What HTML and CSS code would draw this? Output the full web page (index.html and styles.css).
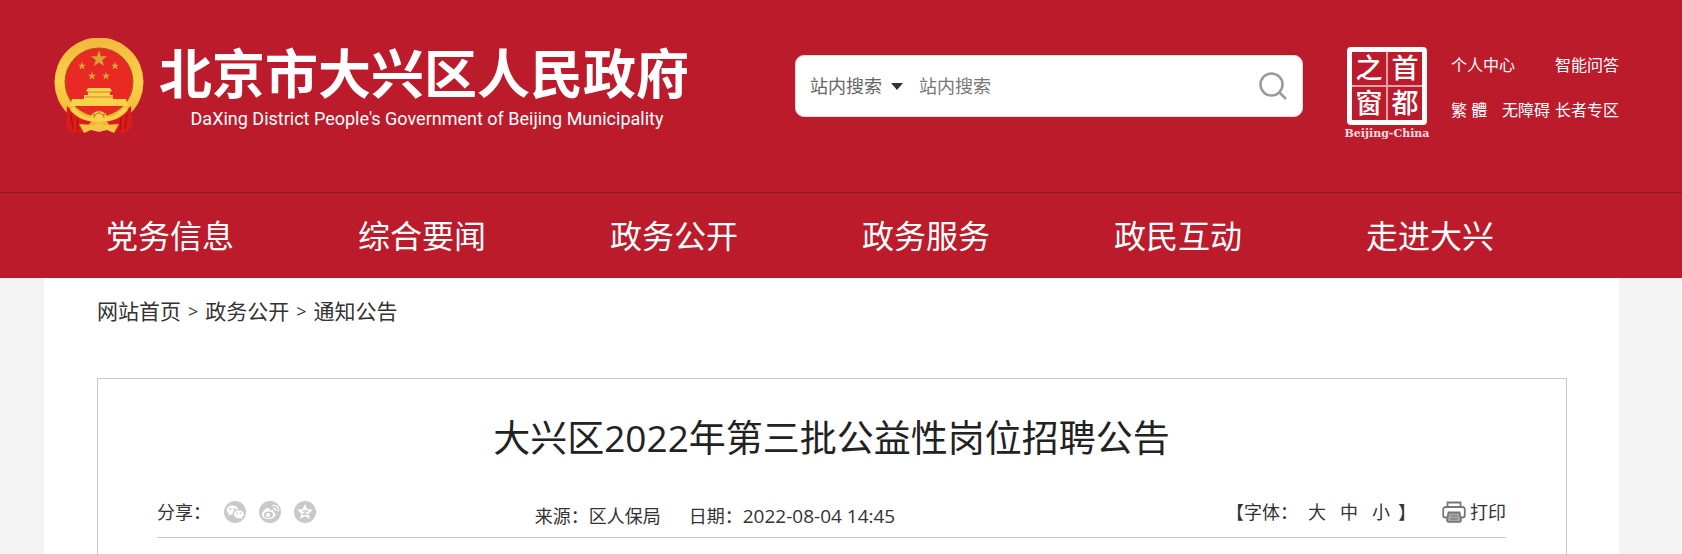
FILE: index.html
```html
<!DOCTYPE html>
<html lang="zh-CN">
<head>
    <meta charset="UTF-8">
    <meta name="viewport" content="width=device-width, initial-scale=1.0">
    <title>大兴区2022年第三批公益性岗位招聘公告</title>
    <link rel="stylesheet" href="styles.css">
</head>
<body>
    <header class="header">
        <div class="top wrap">
            <a class="logo" href="#">
                <svg class="emblem" viewBox="0 0 90 97" aria-hidden="true">
                    <defs>
                        <linearGradient id="gold" x1="0" y1="0" x2="0" y2="1">
                            <stop offset="0" stop-color="#f3b83c"/>
                            <stop offset=".5" stop-color="#fbd04a"/>
                            <stop offset="1" stop-color="#eeb02f"/>
                        </linearGradient>
                        <path id="star" d="M0-10 2.4-3.2 9.5-3.1 3.8 1.2 5.9 8.1 0 4-5.9 8.1-3.8 1.2-9.5-3.1-2.4-3.2z"/>
                    </defs>
                    <circle cx="45" cy="44" r="44.500" fill="url(#gold)"/>
                    <circle cx="45" cy="44" r="34" fill="#e92a24" stroke="#a9581d"/>
                    <g fill="#d9a436">
                        <use href="#star" transform="translate(45 21) scale(.85)"/>
                        <use href="#star" transform="translate(28 28) scale(.42)"/>
                        <use href="#star" transform="translate(61 28) scale(.42)"/>
                        <use href="#star" transform="translate(38 38) scale(.42)"/>
                        <use href="#star" transform="translate(52 38) scale(.42)"/>
                    </g>
                    <path d="M34 50h22l2 3-2 1v3h3v4h13l2 7H16l2-7h12v-4h4v-3l-2-1z" fill="#fbd24c"/>
                    <path d="M33 54h24M31 59h28" stroke="#c7702a" stroke-width=".8"/>
                    <path d="M13 68c8 8 16 12 25 14l-8 12-10 1-8-5zM77 68c-8 8-16 12-25 14l8 12 10 1 8-5z" fill="#dc1b1b"/>
                    <path d="M17 76l2 15M23 80l1 13M73 76l-2 15M67 80l-1 13" stroke="#a80e16" stroke-width="1.200"/>
                    <path d="M19 69c7 8 14 11 26 12 12-1 19-4 26-12l3 3c-7 8-15 12-29 12s-22-4-29-12z" fill="#fbd04a"/>
                    <path d="M36 82a9 9 0 0 1 18 0z" fill="#fbd04a"/>
                    <path d="M40 80a5 5 0 0 1 10 0M45 72v4M38 75l3 3M52 75l-3 3" fill="none" stroke="#cf7d22" stroke-width="1.200"/>
                    <path d="M25 86l14 1 6-3 6 3 14-1-5 9-7-3-8 2-8-2-7 3z" fill="#f4c545"/>
                </svg>
                <span class="logo-text">
                    <strong class="logo-cn">北京市大兴区人民政府</strong>
                    <span class="logo-en">DaXing District People's Government of Beijing Municipality</span>
                </span>
            </a>

            <form class="search">
                <button class="search-type" type="button">站内搜索<span class="arrow"></span></button>
                <input class="search-input" type="text" placeholder="站内搜索" aria-label="站内搜索">
                <button class="search-btn" type="submit" aria-label="搜索">
                    <svg width="28" height="28" viewBox="0 0 28 28" fill="none" stroke="#999" stroke-width="2.500">
                        <circle cx="12.500" cy="12.500" r="11"/>
                        <path d="M20 20l7 7"/>
                    </svg>
                </button>
            </form>

            <a class="capital" href="#">
                <span class="stamp">
                    <span>之</span><span>首</span>
                    <span>窗</span><span>都</span>
                </span>
                <span class="capital-en">Beijing-China</span>
            </a>

            <div class="links">
                <div class="links-row"><a href="#">个人中心</a><a href="#">智能问答</a></div>
                <div class="links-row"><a href="#">繁 體</a><a class="barrier" href="#">无障碍</a><a href="#">长者专区</a></div>
            </div>
        </div>
        <nav class="nav">
            <ul class="nav-list wrap">
                <li><a href="#">党务信息</a></li>
                <li><a href="#">综合要闻</a></li>
                <li><a href="#">政务公开</a></li>
                <li><a href="#">政务服务</a></li>
                <li><a href="#">政民互动</a></li>
                <li><a href="#">走进大兴</a></li>
            </ul>
        </nav>
    </header>

    <main class="main wrap">
        <div class="crumbs">
            <a href="#">网站首页</a><span>&gt;</span><a href="#">政务公开</a><span>&gt;</span><a href="#">通知公告</a>
        </div>

        <article class="article">
            <h1>大兴区2022年第三批公益性岗位招聘公告</h1>
            <div class="info">
                <div class="share">
                    <span>分享：</span>
                    <a href="#" aria-label="微信">
                        <svg width="22" height="22" viewBox="0 0 22 22">
                            <circle cx="11" cy="11" r="11" fill="#c9c9c9"/>
                            <path d="M8.500 4.500c-3.300 0-5.700 2-5.700 4.700 0 1.500.8 2.700 2 3.600l-.5 2 2.200-1.200 2 .3c-.3-3.500 2.500-5.700 5.700-5.700-.6-2.200-2.900-3.700-5.700-3.700z" fill="#fff"/>
                            <path d="M15 9.200c-2.900 0-5 1.800-5 4s2.100 4 5 4l1.600-.3 1.800 1-.5-1.700c1.200-.8 2-1.800 2-3 0-2.200-2.100-4-4.900-4z" fill="#fff"/>
                            <g fill="#bbb"><circle cx="6.500" cy="8" r=".9"/><circle cx="10.500" cy="8" r=".9"/><circle cx="13.300" cy="12.300" r=".8"/><circle cx="16.700" cy="12.300" r=".8"/></g>
                        </svg>
                    </a>
                    <a href="#" aria-label="微博">
                        <svg width="22" height="22" viewBox="0 0 22 22" fill="none">
                            <circle cx="11" cy="11" r="11" fill="#c9c9c9"/>
                            <path d="M9 7c-2 0-6 3.500-6 6.500S6 18 9.500 18s7-2 7-4.500c0-1.500-1-2-2.200-2.300.7-2-.7-2.700-3.600-1.600C11 8 10.500 7 9 7z" fill="#fff"/>
                            <ellipse cx="9.500" cy="13.700" rx="4.500" ry="3.200" fill="#c9c9c9"/>
                            <circle cx="9" cy="14" r="2" fill="#fff"/>
                            <path d="M14 7.500c2-.3 3 .8 2.700 2.500M13.500 4.500c4-.6 6.500 2 5.800 6" stroke="#fff" stroke-width="1.300"/>
                        </svg>
                    </a>
                    <a href="#" aria-label="QQ空间">
                        <svg width="22" height="22" viewBox="0 0 22 22">
                            <circle cx="11" cy="11" r="11" fill="#c9c9c9"/>
                            <path d="M11 3l2.300 5 5.500.7-4 3.800 1 5.500-4.800-2.700L6.200 18l1-5.500-4-3.800 5.500-.7z" fill="#fff"/>
                            <path d="M8 9.800h5.500l-4.500 3.500h5.500" fill="none" stroke="#c9c9c9" stroke-width="1.200"/>
                        </svg>
                    </a>
                </div>
                <div class="source">
                    <span>来源：区人保局</span>
                    <span>日期：<time class="date">2022-08-04 14:45</time></span>
                </div>
                <div class="tools">
                    <span>【字体：</span>
                    <div class="sizes">
                        <a href="#">大</a>
                        <a href="#">中</a>
                        <a href="#">小</a>
                    </div>
                    <span>】</span>
                    <a class="print" href="#">
                        <svg width="24" height="22" viewBox="0 0 24 22" fill="none" stroke="#777" stroke-width="1.800">
                            <path d="M5.500 6V1.500h13V6"/>
                            <path d="M5 16.500H3.500a2.300 2.300 0 0 1-2.300-2.300V8.500A2.500 2.500 0 0 1 3.700 6h16.600a2.500 2.500 0 0 1 2.500 2.500v5.700a2.300 2.300 0 0 1-2.300 2.300H19"/>
                            <path d="M6.500 11.500h11L19 19a1.800 1.800 0 0 1-1.800 1.800H6.800A1.800 1.800 0 0 1 5 19z" fill="#aaa"/>
                            <path d="M8.500 15h7M8.500 17.800h7" stroke-width="1.200"/>
                        </svg>
                        打印
                    </a>
                </div>
            </div>
        </article>
    </main>
</body>
</html>
```

FILE: styles.css
```css
* {
    margin: 0;
    padding: 0;
    box-sizing: border-box;
}

body {
    display: flex;
    flex-direction: column;
    min-height: 100vh;
    background: #f4f4f4;
    color: #333;
    font-family: "Open Sans", "Noto Sans CJK SC", sans-serif;
    font-size: 18px;
    line-height: 24px;
}

a {
    color: inherit;
    text-decoration: none;
}

button,
input {
    border: none;
    background: none;
    font: inherit;
    color: inherit;
}

svg {
    display: block;
}

.wrap {
    margin: 0 63px 0 44px;
}

/* header */
.header {
    background: #bc1b2c;
    color: #fff;
}

.top {
    display: flex;
    align-items: flex-start;
    height: 192px;
    padding-top: 38px;
}

.logo {
    display: flex;
    gap: 15px;
    padding-left: 10px;
}

.emblem {
    width: 90px;
    height: 97px;
}

.logo-text {
    display: flex;
    flex-direction: column;
    align-items: center;
    padding-top: 5px;
}

.logo-cn {
    font-family: "Noto Sans CJK SC", sans-serif;
    font-size: 53px;
    font-weight: 700;
    line-height: 56px;
}

.logo-en {
    padding-left: 6px;
    font-family: Roboto, sans-serif;
    font-size: 18px;
    line-height: 40px;
}

.search {
    display: flex;
    align-items: center;
    flex: 1;
    height: 62px;
    margin: 17px 40px 0 106px;
    padding: 0 15px 0 14px;
    border: 1px solid #ddd;
    border-radius: 9px;
    background: #fff;
    color: #666;
}

.search-type {
    display: flex;
    align-items: center;
    gap: 9px;
    cursor: pointer;
}

.arrow {
    border: 6px solid transparent;
    border-top: 7px solid #333;
    border-bottom: 0;
}

.search-input {
    flex: 1;
    min-width: 0;
    margin-left: 16px;
    outline: none;
}

.search-input::placeholder {
    color: #777;
    opacity: 1;
}

.search-btn {
    cursor: pointer;
}

.capital {
    display: flex;
    flex-direction: column;
    align-items: center;
    width: 88px;
    padding-top: 9px;
}

.stamp {
    display: grid;
    grid-template-columns: 1fr 1fr;
    gap: 2px;
    width: 80px;
    height: 78px;
    border: 5px solid #fff;
    border-radius: 4px;
    background: linear-gradient(#e3a0a7, #e3a0a7) center / 2px 100% no-repeat,
                linear-gradient(#e3a0a7, #e3a0a7) center / 100% 2px no-repeat;
    font-size: 27px;
    font-weight: 500;
    line-height: 32px;
    text-align: center;
}

.capital-en {
    font-family: "DejaVu Serif", serif;
    font-size: 11px;
    font-weight: 700;
    line-height: 18px;
    opacity: .85;
}

.links {
    width: 168px;
    margin-left: 20px;
    padding-top: 15px;
    font-size: 16px;
}

.links-row {
    display: flex;
    justify-content: space-between;
    margin-bottom: 21px;
}

.barrier {
    margin-left: 10px;
}

/* nav */
.nav {
    border-top: 1px solid #8f1a22;
}

.nav-list {
    display: flex;
    list-style: none;
}

.nav-list li {
    width: 16%;
    padding-left: 62px;
    font-size: 32px;
    line-height: 85px;
    white-space: nowrap;
}

/* content */
.main {
    flex: 1;
    display: flex;
    flex-direction: column;
    padding: 0 52px 0 53px;
    background: #fff;
}

.crumbs {
    display: flex;
    gap: 7px;
    padding: 17px 0 51px;
    font-size: 21px;
    line-height: 32px;
}

.crumbs span {
    font-size: 18px;
}

.article {
    flex: 1;
    padding: 29px 60px 0 59px;
    border: 1px solid #ccc;
    border-bottom: 0;
}

.article h1 {
    color: #222;
    font-size: 37px;
    font-weight: 400;
    line-height: 60px;
    text-align: center;
}

.info {
    display: grid;
    grid-template-columns: 28% 1fr auto;
    align-items: start;
    margin-top: 27px;
    border-bottom: 1px solid #ccc;
    line-height: 34px;
}

.share {
    display: flex;
    align-items: center;
    gap: 13px;
}

.source {
    display: flex;
    gap: 28px;
    padding: 4px 0;
}

.date {
    font-size: 19px;
}

.tools {
    display: flex;
}

.sizes {
    display: flex;
    gap: 14px;
    margin: 0 8px 0 10px;
}

.print {
    display: flex;
    align-items: center;
    gap: 4px;
    margin-left: 26px;
}
```
